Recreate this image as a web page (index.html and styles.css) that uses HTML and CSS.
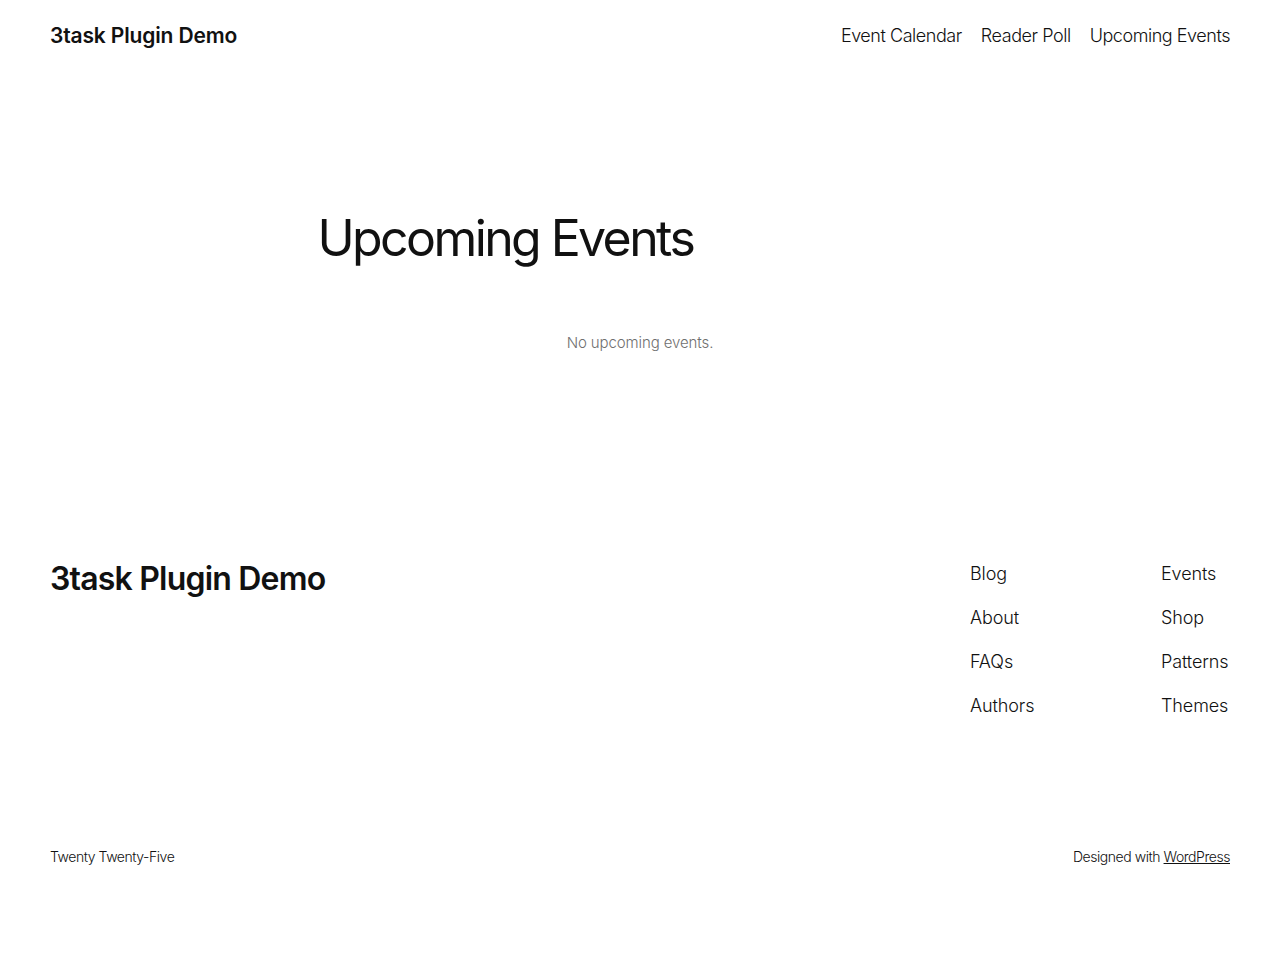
FILE: index.html
```html
<!DOCTYPE html>
<html lang="en">
<head>
<meta charset="utf-8">
<title>Upcoming Events – 3task Plugin Demo</title>
<link rel="stylesheet" href="styles.css">
</head>
<body>
<header class="site-header">
  <a class="site-title" href="#">3task Plugin Demo</a>
  <nav class="main-nav">
    <a href="#">Event Calendar</a>
    <a href="#">Reader Poll</a>
    <a href="#">Upcoming Events</a>
  </nav>
</header>
<main class="content">
  <h1 class="page-title">Upcoming Events</h1>
  <p class="empty">No upcoming events.</p>
</main>
<footer class="site-footer">
  <div class="footer-top">
    <a class="footer-title" href="#">3task Plugin Demo</a>
    <div class="footer-navs">
      <nav class="footer-col">
        <a href="#">Blog</a>
        <a href="#">About</a>
        <a href="#">FAQs</a>
        <a href="#">Authors</a>
      </nav>
      <nav class="footer-col">
        <a href="#">Events</a>
        <a href="#">Shop</a>
        <a href="#">Patterns</a>
        <a href="#">Themes</a>
      </nav>
    </div>
  </div>
  <div class="footer-bottom">
    <span>Twenty Twenty-Five</span>
    <span>Designed with <a href="#">WordPress</a></span>
  </div>
</footer>
</body>
</html>
```
FILE: styles.css
```css
* { box-sizing: border-box; }
html, body { margin: 0; padding: 0; }
body {
  font-family: Inter, "Noto Sans", sans-serif;
  color: #111111;
  background: #ffffff;
  -webkit-font-smoothing: antialiased;
}
a { color: inherit; text-decoration: none; }

.site-header {
  display: flex;
  justify-content: space-between;
  align-items: center;
  height: 70px;
  padding: 0 50px;
}
.site-title {
  font-size: 21px;
  font-weight: 600;
  letter-spacing: -0.15px;
}
.main-nav {
  display: flex;
  gap: 19px;
  font-size: 18px;
  font-weight: 300;
  letter-spacing: -0.45px;
}

.content {
  width: 645px;
  margin: 0 auto;
  padding-top: 138px;
  padding-bottom: 182px;
}
.page-title {
  margin: 0;
  font-size: 50px;
  font-weight: 400;
  line-height: 1.2;
  letter-spacing: -2.6px;
}
.empty {
  margin: 65px 0 0;
  text-align: center;
  font-size: 15px;
  font-weight: 300;
  color: #6f6f6f;
  letter-spacing: -0.1px;
}

.site-footer {
  padding: 26px 50px 90px;
}
.footer-top {
  display: flex;
  justify-content: space-between;
  align-items: flex-start;
}
.footer-title {
  font-size: 32px;
  font-weight: 600;
  letter-spacing: -0.8px;
  line-height: 1.2;
}
.footer-navs {
  display: flex;
  margin-top: 3px;
}
.footer-col {
  display: flex;
  flex-direction: column;
  gap: 22px;
  font-size: 18px;
  font-weight: 300;
  letter-spacing: -0.1px;
  line-height: 22px;
}
.footer-col:first-child { width: 191px; }
.footer-col:last-child { min-width: 69px; }
.footer-bottom {
  display: flex;
  justify-content: space-between;
  margin-top: 131px;
  font-size: 14px;
  font-weight: 300;
  letter-spacing: -0.45px;
}
.footer-bottom a { text-decoration: underline; }
```
